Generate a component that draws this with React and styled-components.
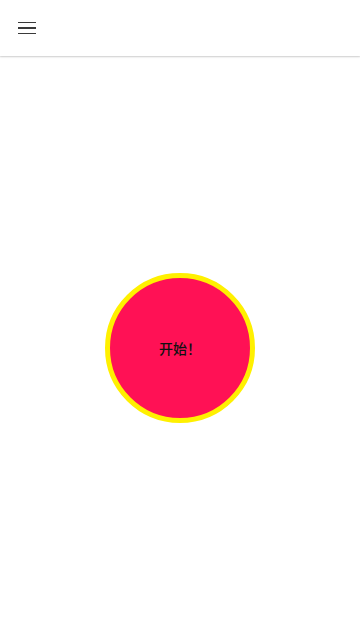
import React from "react";
import styled, { createGlobalStyle } from "styled-components";

const GlobalStyle = createGlobalStyle`
  html, body { margin: 0; padding: 0; background: #ffffff; }
  body { font-family: "Noto Sans CJK SC", "Noto Sans", sans-serif; }
  #root { height: 100vh; }
`;

const Page = styled.div`
  display: flex;
  flex-direction: column;
  height: 100vh;
  background: #ffffff;
`;

const Toolbar = styled.header`
  position: relative;
  z-index: 1;
  flex: 0 0 56px;
  display: flex;
  align-items: center;
  padding: 0 16px;
  background: #ffffff;
  box-shadow: 0 1px 2px rgba(0, 0, 0, 0.14), 0 1px 1px rgba(0, 0, 0, 0.06);
`;

const MenuButton = styled.button`
  display: flex;
  flex-direction: column;
  justify-content: center;
  gap: 4px;
  width: 24px;
  height: 24px;
  padding: 0 2px;
  border: 0;
  background: transparent;
  cursor: pointer;
`;

const MenuLine = styled.span`
  display: block;
  height: 1.5px;
  width: 18px;
  background: #3a3a3a;
`;

const Main = styled.main`
  flex: 1;
  display: flex;
  align-items: center;
  justify-content: center;
`;

const StartButton = styled.button`
  box-sizing: border-box;
  width: 150px;
  height: 150px;
  border-radius: 50%;
  border: 5px solid #fff000;
  background: #ff1155;
  color: #111111;
  font-family: "Noto Sans CJK SC", "Noto Sans", sans-serif;
  font-size: 14px;
  font-weight: 500;
  display: flex;
  align-items: center;
  justify-content: center;
  padding: 0;
  cursor: pointer;
`;

export default function App() {
  return (
    <>
      <GlobalStyle />
      <Page>
        <Toolbar>
          <MenuButton aria-label="menu">
            <MenuLine />
            <MenuLine />
            <MenuLine />
          </MenuButton>
        </Toolbar>
        <Main>
          <StartButton>开始！</StartButton>
        </Main>
      </Page>
    </>
  );
}
